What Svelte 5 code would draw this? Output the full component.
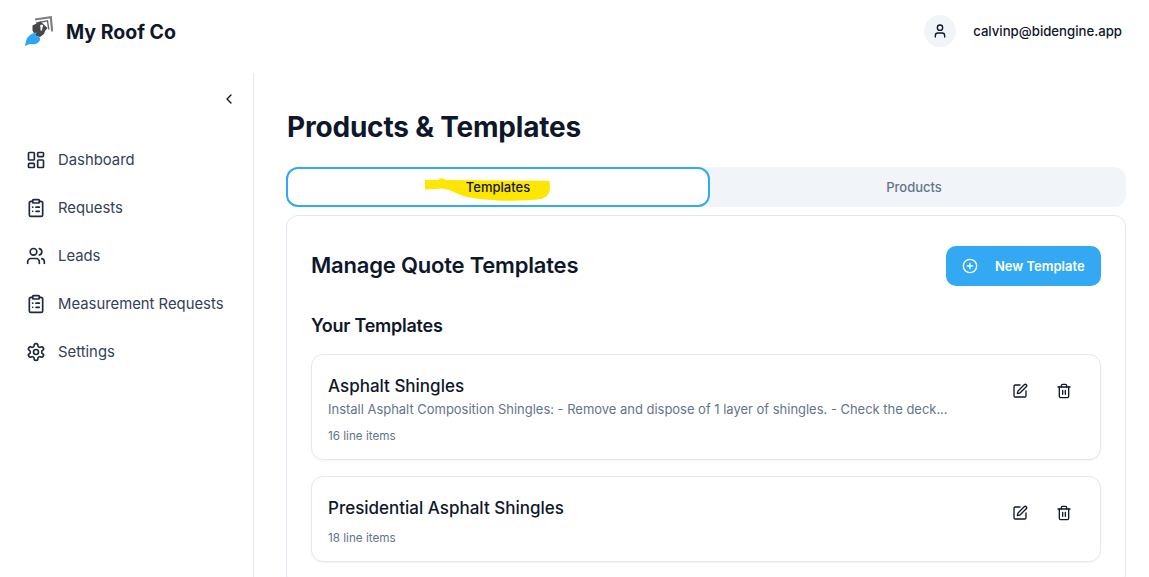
<script>
	const nav = [
		{ label: 'Dashboard', icon: 'dashboard' },
		{ label: 'Requests', icon: 'clipboard' },
		{ label: 'Leads', icon: 'users' },
		{ label: 'Measurement Requests', icon: 'clipboard' },
		{ label: 'Settings', icon: 'settings' }
	];

	const templates = [
		{
			name: 'Asphalt Shingles',
			description:
				'Install Asphalt Composition Shingles: - Remove and dispose of 1 layer of shingles. - Check the deck...',
			items: 16
		},
		{ name: 'Presidential Asphalt Shingles', description: '', items: 18 }
	];
</script>

{#snippet navIcon(name)}
	<svg class="nav-icon" viewBox="0 0 24 24" fill="none" stroke="currentColor" stroke-width="2" stroke-linecap="round" stroke-linejoin="round">
		{#if name === 'dashboard'}
			<rect width="7" height="9" x="3" y="3" rx="1" />
			<rect width="7" height="5" x="14" y="3" rx="1" />
			<rect width="7" height="9" x="14" y="12" rx="1" />
			<rect width="7" height="5" x="3" y="16" rx="1" />
		{:else if name === 'clipboard'}
			<rect width="8" height="4" x="8" y="2" rx="1" />
			<path d="M16 4h2a2 2 0 0 1 2 2v14a2 2 0 0 1-2 2H6a2 2 0 0 1-2-2V6a2 2 0 0 1 2-2h2" />
			<path d="M12 11h4M12 16h4M8 11h.01M8 16h.01" />
		{:else if name === 'users'}
			<path d="M16 21v-2a4 4 0 0 0-4-4H6a4 4 0 0 0-4 4v2" />
			<circle cx="9" cy="7" r="4" />
			<path d="M22 21v-2a4 4 0 0 0-3-3.87" />
			<path d="M16 3.13a4 4 0 0 1 0 7.75" />
		{:else}
			<path d="M12.22 2h-.44a2 2 0 0 0-2 2v.18a2 2 0 0 1-1 1.73l-.43.25a2 2 0 0 1-2 0l-.15-.08a2 2 0 0 0-2.73.73l-.22.38a2 2 0 0 0 .73 2.73l.15.1a2 2 0 0 1 1 1.72v.51a2 2 0 0 1-1 1.74l-.15.09a2 2 0 0 0-.73 2.73l.22.38a2 2 0 0 0 2.73.73l.15-.08a2 2 0 0 1 2 0l.43.25a2 2 0 0 1 1 1.73V20a2 2 0 0 0 2 2h.44a2 2 0 0 0 2-2v-.18a2 2 0 0 1 1-1.73l.43-.25a2 2 0 0 1 2 0l.15.08a2 2 0 0 0 2.73-.73l.22-.39a2 2 0 0 0-.73-2.73l-.15-.08a2 2 0 0 1-1-1.74v-.5a2 2 0 0 1 1-1.74l.15-.09a2 2 0 0 0 .73-2.73l-.22-.38a2 2 0 0 0-2.73-.73l-.15.08a2 2 0 0 1-2 0l-.43-.25a2 2 0 0 1-1-1.73V4a2 2 0 0 0-2-2z" />
			<circle cx="12" cy="12" r="3" />
		{/if}
	</svg>
{/snippet}

<div class="shell">
	<header class="topbar">
		<div class="brand">
			<svg class="logo" viewBox="0 0 28 31">
				<path d="M10 3.5 L25.8 1.2 L27.2 15.5" fill="none" stroke="#808082" stroke-width="2.2" />
				<path d="M11 7 L22.5 4.8 L23.8 13.5" fill="none" stroke="#6a6a6c" stroke-width="1.4" />
				<path d="M7.5 9.5 L15.5 5.5 L22.5 12 L20 15 L19 18 L15 21 L10.5 19.5 L7.5 14.5 Z" fill="#47474a" />
				<circle cx="16.6" cy="10" r="1.5" fill="#fff" />
				<path d="M15.6 10.5 L17.6 10.5 L17 14.5 L15.5 14.5 Z" fill="#fff" />
				<path d="M0 30.5 C0.5 26 1.5 22 4 20 C6 18 9 16.5 12 16.5 C11 18 10.5 19 11 20 C13 19.5 15 20.5 15 23 C15 27 10 29 6 28 C3.5 28 1.5 29 0 30.5 Z" fill="#2ea6f4" />
			</svg>
			<span class="brand-name">My Roof Co</span>
		</div>
		<div class="account">
			<span class="avatar">
				<svg viewBox="0 0 24 24" fill="none" stroke="currentColor" stroke-width="2" stroke-linecap="round" stroke-linejoin="round">
					<path d="M19 21v-2a4 4 0 0 0-4-4H9a4 4 0 0 0-4 4v2" />
					<circle cx="12" cy="7" r="4" />
				</svg>
			</span>
			<span class="email">calvinp@bidengine.app</span>
		</div>
	</header>

	<div class="body-row">
		<aside class="sidebar">
			<div class="collapse">
				<svg viewBox="0 0 24 24" fill="none" stroke="currentColor" stroke-width="2" stroke-linecap="round" stroke-linejoin="round">
					<path d="m15 18-6-6 6-6" />
				</svg>
			</div>
			<nav>
				{#each nav as item}
					<a class="nav-link" href="#top">
						{@render navIcon(item.icon)}
						<span>{item.label}</span>
					</a>
				{/each}
			</nav>
		</aside>

		<main>
			<h1>Products &amp; Templates</h1>

			<div class="tabs">
				<button class="tab active">
					<svg class="marker" viewBox="0 0 128 26" preserveAspectRatio="none">
						<path d="M1 3 L14 3 C16 1 19 1 22 3 L125 4 C127 4 127 6 127 10 C127 18 124 21 118 23 C95 26 62 25 40 20 C32 17 27 13 18 12 L1 13 Z" fill="#ffe600" />
					</svg>
					<span>Templates</span>
				</button>
				<button class="tab other">Products</button>
			</div>

			<section class="panel">
				<div class="panel-head">
					<h2>Manage Quote Templates</h2>
					<button class="new-btn">
						<svg viewBox="0 0 24 24" fill="none" stroke="currentColor" stroke-width="2" stroke-linecap="round" stroke-linejoin="round">
							<circle cx="12" cy="12" r="10" />
							<path d="M8 12h8M12 8v8" />
						</svg>
						New Template
					</button>
				</div>

				<h3>Your Templates</h3>

				<div class="list">
					{#each templates as t}
						<article class="card">
							<div class="card-text">
								<h4>{t.name}</h4>
								{#if t.description}
									<p class="desc">{t.description}</p>
								{/if}
								<p class="count">{t.items} line items</p>
							</div>
							<div class="actions">
								<button class="icon-btn" aria-label="Edit">
									<svg viewBox="0 0 24 24" fill="none" stroke="currentColor" stroke-width="2" stroke-linecap="round" stroke-linejoin="round">
										<path d="M12 3H5a2 2 0 0 0-2 2v14a2 2 0 0 0 2 2h14a2 2 0 0 0 2-2v-7" />
										<path d="M18.375 2.625a1 1 0 0 1 3 3l-9.013 9.014a2 2 0 0 1-.853.505l-2.873.84a.5.5 0 0 1-.62-.62l.84-2.873a2 2 0 0 1 .506-.852z" />
									</svg>
								</button>
								<button class="icon-btn" aria-label="Delete">
									<svg viewBox="0 0 24 24" fill="none" stroke="currentColor" stroke-width="2" stroke-linecap="round" stroke-linejoin="round">
										<path d="M3 6h18" />
										<path d="M19 6v14c0 1-1 2-2 2H7c-1 0-2-1-2-2V6" />
										<path d="M8 6V4c0-1 1-2 2-2h4c1 0 2 1 2 2v2" />
										<path d="M10 11v6M14 11v6" />
									</svg>
								</button>
							</div>
						</article>
					{/each}
				</div>
			</section>
		</main>
	</div>
</div>

<style>
	:global(body) {
		overflow: hidden;
		background: #fff;
	}

	.shell {
		height: 577px;
		overflow: hidden;
		font-family: Inter, "Noto Sans", sans-serif;
		color: #0f172a;
		display: flex;
		flex-direction: column;
	}

	.topbar {
		flex: none;
		height: 73px;
		box-sizing: border-box;
		padding: 0 27px 11px 25px;
		display: flex;
		align-items: center;
		justify-content: space-between;
	}

	.brand {
		display: flex;
		align-items: center;
		gap: 13px;
	}

	.logo {
		width: 28px;
		height: 31px;
	}

	.brand-name {
		font-size: 19.5px;
		font-weight: 700;
		padding-top: 2px;
	}

	.account {
		display: flex;
		align-items: center;
		gap: 17px;
	}

	.avatar {
		width: 32px;
		height: 32px;
		border-radius: 50%;
		background: #f1f5f9;
		display: flex;
		align-items: center;
		justify-content: center;
	}

	.avatar svg {
		width: 16px;
		height: 16px;
	}

	.email {
		font-size: 13.2px;
		font-weight: 500;
	}

	.body-row {
		flex: 1;
		min-height: 0;
		display: flex;
	}

	.sidebar {
		flex: none;
		width: 254px;
		box-sizing: border-box;
		border-right: 1px solid #e2e8f0;
		padding: 18px 16px 0 26px;
	}

	.collapse {
		display: flex;
		justify-content: flex-end;
		height: 16px;
	}

	.collapse svg {
		width: 16px;
		height: 16px;
	}

	nav {
		margin-top: 33px;
		display: flex;
		flex-direction: column;
		gap: 8px;
	}

	.nav-link {
		height: 40px;
		display: flex;
		align-items: center;
		gap: 12px;
		color: #334155;
		font-size: 14.85px;
		text-decoration: none;
		white-space: nowrap;
	}

	.nav-icon {
		width: 20px;
		height: 20px;
		color: #1e293b;
		flex: none;
	}

	main {
		flex: 1;
		min-width: 0;
		padding: 34px 23px 0 32px;
	}

	h1 {
		margin: 0 0 20px;
		font-size: 28px;
		line-height: 40px;
		font-weight: 700;
		letter-spacing: -0.2px;
		padding-left: 1px;
	}

	.tabs {
		display: grid;
		grid-template-columns: 424px 1fr;
		height: 40px;
		background: #f1f5f9;
		border-radius: 12px;
	}

	.tab {
		position: relative;
		border: none;
		background: none;
		font-family: inherit;
		font-size: 13px;
		font-weight: 500;
		color: #64748b;
		padding: 0;
	}

	.tab.other {
		padding-right: 8px;
	}

	.tab.active {
		background: #fff;
		border: 2px solid #33a9f3;
		border-radius: 12px;
		color: #0f172a;
	}

	.tab span {
		position: relative;
	}

	.marker {
		position: absolute;
		left: 136px;
		top: 8px;
		width: 127px;
		height: 25px;
	}

	.panel {
		margin-top: 8px;
		border: 1px solid #e2e8f0;
		border-radius: 12px;
		padding: 30px 24px 24px;
	}

	.panel-head {
		display: flex;
		align-items: center;
		justify-content: space-between;
	}

	h2 {
		margin: 0;
		padding-bottom: 3px;
		font-size: 22px;
		font-weight: 600;
		letter-spacing: -0.2px;
	}

	.new-btn {
		width: 155px;
		height: 40px;
		border: none;
		border-radius: 10px;
		background: #33a9f3;
		color: #fff;
		font-family: inherit;
		font-size: 13px;
		font-weight: 600;
		display: flex;
		align-items: center;
		gap: 17px;
		padding: 0 16px;
		white-space: nowrap;
	}

	.new-btn svg {
		width: 16px;
		height: 16px;
		flex: none;
	}

	h3 {
		margin: 26px 0 14px;
		font-size: 18px;
		line-height: 28px;
		font-weight: 600;
		letter-spacing: -0.25px;
	}

	.list {
		display: flex;
		flex-direction: column;
		gap: 16px;
	}

	.card {
		border: 1px solid #e2e8f0;
		border-radius: 12px;
		box-shadow: 0 1px 2px rgba(15, 23, 42, 0.05);
		padding: 19px 18px 15px 16px;
		display: flex;
		justify-content: space-between;
	}

	h4 {
		margin: 0;
		font-size: 17px;
		line-height: 25px;
		font-weight: 500;
	}

	.desc {
		margin: 0;
		font-size: 12.96px;
		line-height: 20px;
		color: #64748b;
		white-space: nowrap;
	}

	.count {
		margin: 9px 0 0;
		font-size: 11.7px;
		line-height: 16px;
		color: #64748b;
	}

	.actions {
		display: flex;
		gap: 8px;
		height: 36px;
		margin-top: -1px;
	}

	.icon-btn {
		width: 36px;
		height: 36px;
		border: none;
		background: none;
		padding: 0;
		color: #0f172a;
		display: flex;
		align-items: center;
		justify-content: center;
	}

	.icon-btn svg {
		width: 16px;
		height: 16px;
	}
</style>
